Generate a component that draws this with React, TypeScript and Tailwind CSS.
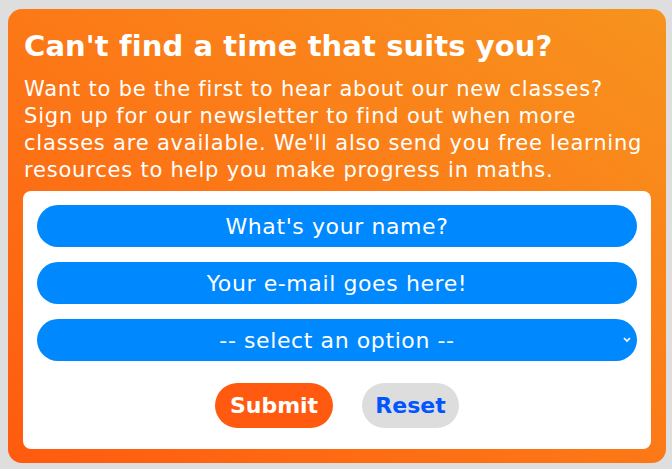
export default function App() {
  const field =
    'w-full h-[42px] rounded-full bg-[#0088ff] text-white text-center text-[22px] tracking-[0.6px] outline-none placeholder:text-white';

  return (
    <div className="min-h-[469px] w-[672px] bg-[#dedede] pt-[9px] pl-[8px] pr-[6px] font-['DejaVu_Sans',sans-serif]">
      <div className="h-[454px] rounded-[14px] bg-gradient-to-tr from-[#ff5a0f] to-[#f7931e] px-[15px] pt-[19px]">
        <h2 className="px-[1px] text-[29px] leading-[36px] font-bold tracking-[0.1px] text-white">
          Can't find a time that suits you?
        </h2>
        <p className="mt-[12px] px-[1px] text-[21px] leading-[27px] tracking-[0.8px] whitespace-nowrap text-white">
          Want to be the first to hear about our new classes?
          <br />
          Sign up for our newsletter to find out when more
          <br />
          classes are available. We'll also send you free learning
          <br />
          resources to help you make progress in maths.
        </p>

        {/* Formulário */}
        <form className="mt-[7px] flex h-[258px] flex-col gap-[15px] rounded-[8px] bg-white px-[14px] pt-[14px]">
          <input className={field} placeholder="What's your name?" />
          <input className={field} placeholder="Your e-mail goes here!" />
          <div className="relative">
            <select className={`${field} appearance-none`} defaultValue="">
              <option value="" disabled>
                -- select an option --
              </option>
            </select>
            <svg
              className="pointer-events-none absolute right-[5px] top-[17px]"
              width="10"
              height="8"
              viewBox="0 0 10 8"
            >
              <path d="M2 2l3 3 3-3" fill="none" stroke="white" strokeWidth="1.6" />
            </svg>
          </div>

          <div className="mt-[7px] flex justify-center gap-[29px]">
            <button
              type="button"
              className="h-[45px] w-[118px] rounded-full bg-[#ff5a0f] text-[22px] font-bold text-white"
            >
              Submit
            </button>
            <button
              type="reset"
              className="h-[45px] w-[97px] rounded-full bg-[#dddddd] text-[22px] font-bold text-[#0055ff]"
            >
              Reset
            </button>
          </div>
        </form>
      </div>
    </div>
  );
}
